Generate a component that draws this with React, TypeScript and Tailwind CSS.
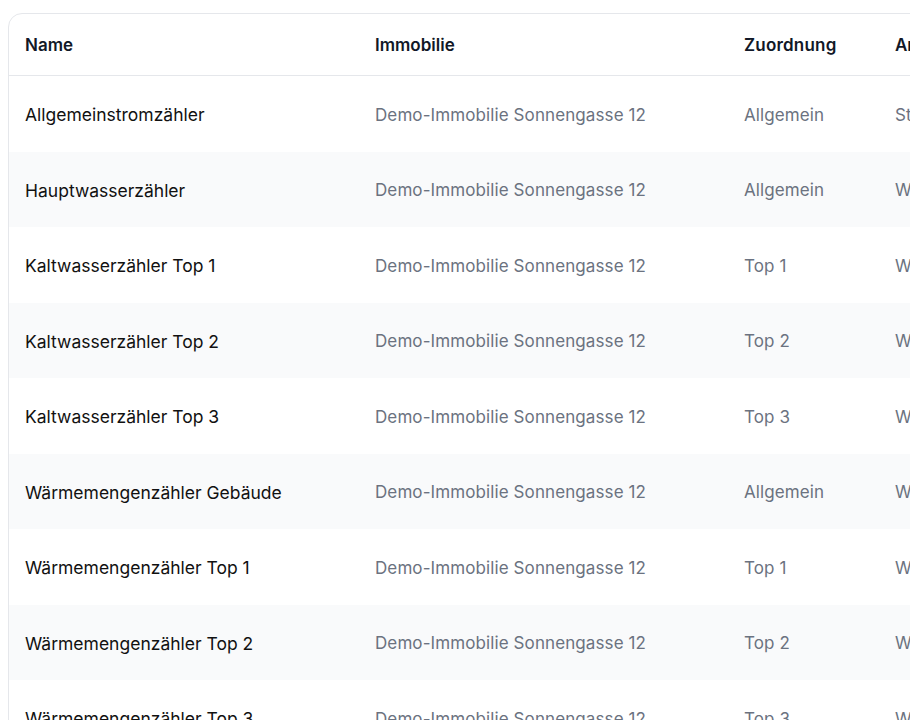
import React from "react";

const rows = [
  ["Allgemeinstromzähler", "Allgemein", "Strom"],
  ["Hauptwasserzähler", "Allgemein", "Wasser"],
  ["Kaltwasserzähler Top 1", "Top 1", "Wasser"],
  ["Kaltwasserzähler Top 2", "Top 2", "Wasser"],
  ["Kaltwasserzähler Top 3", "Top 3", "Wasser"],
  ["Wärmemengenzähler Gebäude", "Allgemein", "Wärme"],
  ["Wärmemengenzähler Top 1", "Top 1", "Wärme"],
  ["Wärmemengenzähler Top 2", "Top 2", "Wärme"],
  ["Wärmemengenzähler Top 3", "Top 3", "Wärme"],
];

export default function App() {
  return (
    <div
      className="w-[910px] h-[720px] overflow-hidden bg-white pl-[8px] pt-[13px]"
      style={{ fontFamily: "Inter, 'Noto Sans', sans-serif" }}
    >
      <div className="w-[1100px] rounded-[14px] border border-[#e5e7eb] bg-white overflow-hidden">
        <div className="flex h-[62px] items-center pt-[3px] border-b border-[#e5e7eb] text-[17px] font-semibold text-[#111827]">
          <div className="w-[366px] pl-[16px]">Name</div>
          <div className="w-[369px]">Immobilie</div>
          <div className="w-[151px] tracking-[0.2px]">Zuordnung</div>
          <div className="flex-1">Art</div>
        </div>
        {rows.map((r, i) => (
          <div
            key={i}
            className={
              "flex h-[75.5px] items-center pt-[3px] text-[17px] " +
              (i % 2 === 1 ? "bg-[#f9fafb]" : "bg-white")
            }
          >
            <div className="w-[366px] pl-[16px] text-[17.5px] text-[#111111]">{r[0]}</div>
            <div className="w-[369px] tracking-[0.1px] text-[#6b7280]">Demo-Immobilie Sonnengasse 12</div>
            <div className="w-[151px] tracking-[0.1px] text-[#6b7280]">{r[1]}</div>
            <div className="flex-1 text-[#6b7280]">{r[2]}</div>
          </div>
        ))}
      </div>
    </div>
  );
}
